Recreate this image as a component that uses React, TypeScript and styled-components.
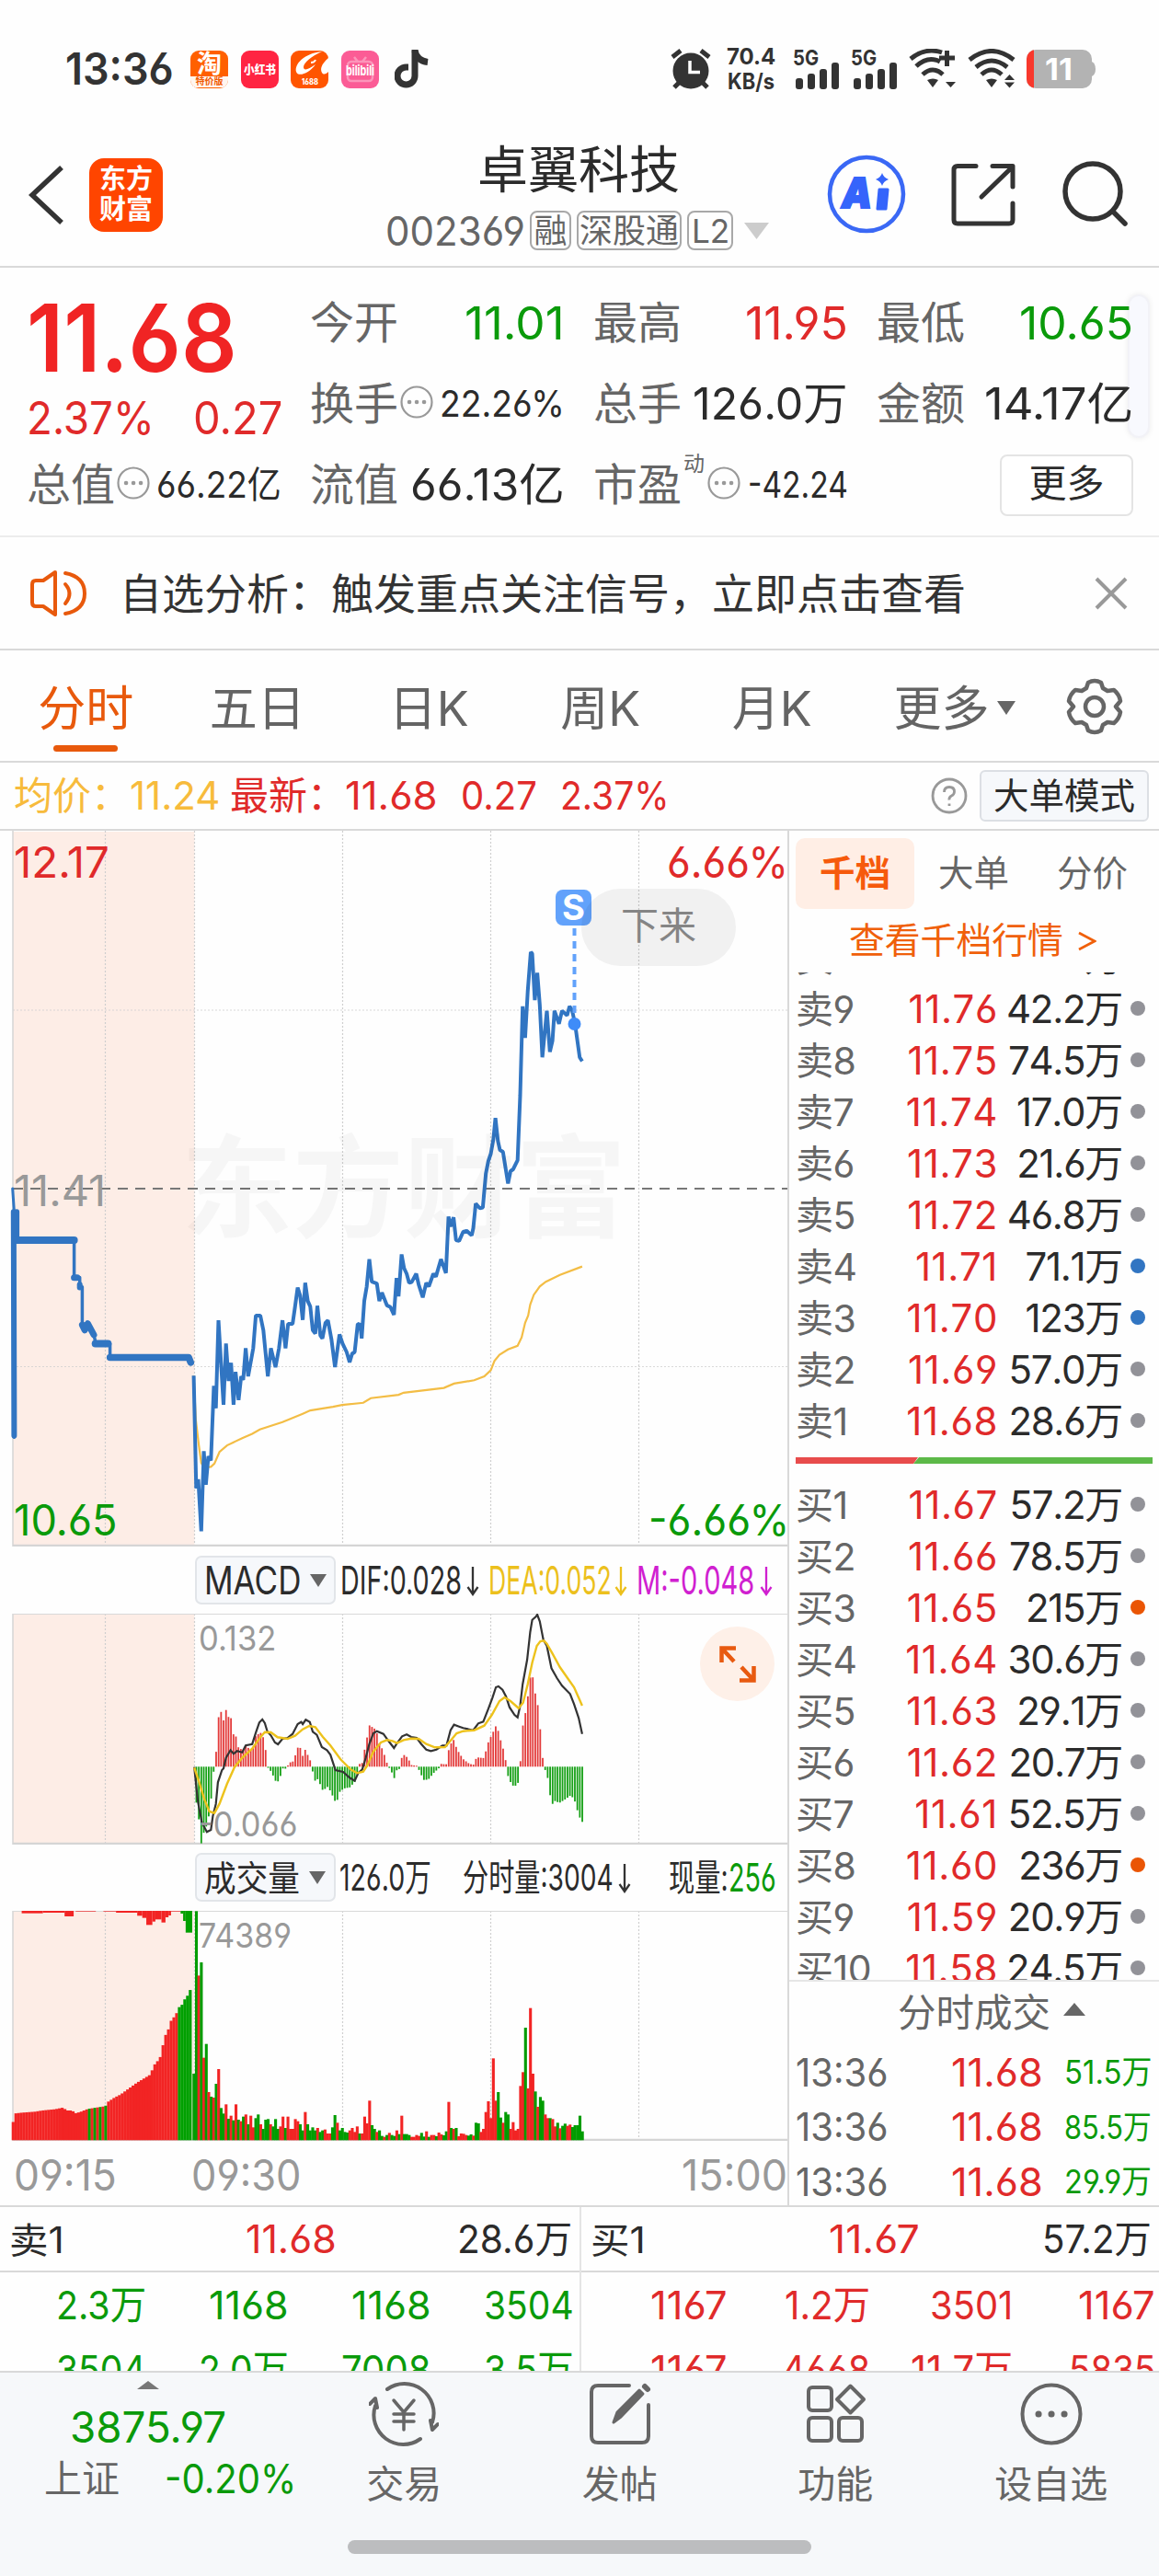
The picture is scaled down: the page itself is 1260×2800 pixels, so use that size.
import React, { useLayoutEffect, useRef, useState } from 'react';
import styled, { createGlobalStyle } from 'styled-components';

const C = {
  red: '#e02a2a',
  hot: '#f02424',
  green: '#0a9a0a',
  ink: '#2b2b2b',
  grey: '#666',
  mute: '#999',
  line: '#d9d9d9',
  orange: '#e8590c',
  blue: '#3175c2',
};

const Global = createGlobalStyle`
  * { box-sizing: border-box; }
  body { margin: 0; background: #fff; }
`;

const Screen = styled.div`
  width: 1260px;
  height: 2800px;
  overflow: hidden;
  background: #fefefe;
  color: ${C.ink};
  display: flex;
  flex-direction: column;
  position: relative;
  font-family: Inter, 'Noto Sans CJK SC', sans-serif;
  font-feature-settings: 'cv03', 'cv04';
  line-height: 1;
  white-space: nowrap;
`;

/* Text squeezed or stretched horizontally to a set width */
const FitBox = styled.span<{ $w: number }>`
  display: inline-block;
  flex: none;
  width: ${(p) => p.$w}px;
`;
const FitInner = styled.span`
  display: inline-block;
  transform-origin: left center;
`;
function Fit({ w, children }: { w: number; children: React.ReactNode }) {
  const ref = useRef<HTMLSpanElement>(null);
  const [k, setK] = useState(1);
  useLayoutEffect(() => {
    if (ref.current) setK(w / ref.current.offsetWidth);
  }, [w]);
  return (
    <FitBox $w={w}>
      <FitInner ref={ref} style={{ transform: `scaleX(${k})` }}>{children}</FitInner>
    </FitBox>
  );
}

const T = styled.span<{ $c?: string; $s?: number; $b?: number; $ml?: number }>`
  flex: none;
  color: ${(p) => p.$c || C.ink};
  font-size: ${(p) => p.$s || 42}px;
  font-weight: ${(p) => p.$b || 400};
  margin-left: ${(p) => p.$ml || 0}px;
`;
const Spring = styled.span`flex: 1;`;

/* ---------- status bar ---------- */
const StatusBar = styled.div`
  height: 150px;
  padding: 0 68px 0 71px;
  display: flex;
  align-items: center;
  flex: none;
`;
const AppIcon = styled.div<{ $bg: string; $ml?: number }>`
  width: 41px;
  height: 41px;
  margin-left: ${(p) => p.$ml ?? 14}px;
  border-radius: 9px;
  background: ${(p) => p.$bg};
  color: #fff;
  overflow: hidden;
  display: flex;
  flex-direction: column;
  align-items: center;
  justify-content: center;
  flex: none;
`;
const TaoBottom = styled.div`
  width: 41px;
  height: 12px;
  flex: none;
  background: #fff6f0;
  color: #f05a00;
  font-size: 10px;
  font-weight: 700;
  text-align: center;
  line-height: 11px;
`;
const NetSpeed = styled.div`
  display: flex;
  flex-direction: column;
  align-items: center;
  gap: 3px;
  margin-left: 17px;
  color: #333;
  font-size: 24px;
  font-weight: 700;
`;

const Signal = () => (
  <svg width="50" height="43" viewBox="0 0 50 43" fill="#333">
    <rect x="3" y="31" width="8" height="12" rx="3" />
    <rect x="16" y="26" width="8" height="17" rx="3" />
    <rect x="29" y="21" width="8" height="22" rx="3" />
    <rect x="42" y="14" width="8" height="29" rx="3" />
    <text x="0" y="17" fontSize="23" fontWeight="700" textLength="28" lengthAdjust="spacingAndGlyphs">5G</text>
  </svg>
);
const Wifi = ({ plus }: { plus?: boolean }) => (
  <svg width="53" height="44" viewBox="0 0 53 44" fill="none" stroke="#333" strokeWidth="5">
    <path d={plus ? 'M2 11Q18 -2 36 4' : 'M2 12Q26 -7 50 12'} />
    <path d={plus ? 'M8 19Q21 7 34 14' : 'M9 20Q26 6 43 20'} />
    <path d="M15 28Q26 18 37 28" />
    <path d="M20 34Q26 31 32 34L26 42Z" fill="#333" stroke="none" />
    {plus ? (
      <>
        <path d="M33 10H50M41.500 2V19" />
        <path d="M40 36h11l-5.500 6z" fill="#333" stroke="none" />
      </>
    ) : (
      <path d="M40 34l5.500-6 5.500 6zM40 36.500l5.500 6 5.500-6z" fill="#333" stroke="none" />
    )}
  </svg>
);
const Gap = styled.span<{ $w: number }>`
  width: ${(p) => p.$w}px;
  flex: none;
`;

function Status() {
  return (
    <StatusBar>
      <T $s={48} $b={600} $c="#333"><Fit w={118}>13:36</Fit></T>
      <AppIcon $bg="#ff6000" $ml={18}>
        <T $s={27} $b={700} $c="#fff">淘</T>
        <TaoBottom>特价版</TaoBottom>
      </AppIcon>
      <AppIcon $bg="#ff2442"><T $s={13} $b={900} $c="#fff"><Fit w={35}>小红书</Fit></T></AppIcon>
      <AppIcon $bg="#ff5500" $ml={13}>
        <svg width="41" height="41" viewBox="0 0 41 41">
          <path d="M34 1C14 3 4 15 6 23c2 6 14 2 21-8-8 6-13 7-13 3 0-5 9-12 20-17zM41 8c-8 7-9 12-7 16 2 3 5 1 7-1" fill="#fff" />
          <path d="M22 13q4 0 5-3" stroke="#fff" strokeWidth="2" fill="none" />
          <text x="12" y="37" fontSize="8.500" fontWeight="800" fill="#fff" textLength="18" lengthAdjust="spacingAndGlyphs">1688</text>
        </svg>
      </AppIcon>
      <AppIcon $bg="#fb5c96">
        <svg width="41" height="41" viewBox="0 0 41 41" fill="none" stroke="#fff">
          <g opacity=".35" strokeWidth="2.500"><rect x="7" y="12" width="27" height="21" rx="4" /><path d="M14 7l4 5M27 7l-4 5" /></g>
          <text x="5" y="27" fontSize="15" fontWeight="700" fill="#fff" stroke="none" textLength="31" lengthAdjust="spacingAndGlyphs">bilibili</text>
        </svg>
      </AppIcon>
      <Gap $w={17} />
      <svg width="37" height="42" viewBox="0 0 37 42" fill="none" stroke="#333" strokeWidth="7">
        <path d="M22 0v28.500A9.500 9.500 0 1 1 12.500 19H15" />
        <path d="M22 1q2 11 14 12.500" />
      </svg>
      <Spring />
      <svg width="44" height="44" viewBox="0 0 44 44">
        <circle cx="22" cy="24" r="19.500" fill="#333" />
        <path d="M2 9l9-7M42 9l-9-7M4 42l6-6M40 42l-6-6" stroke="#333" strokeWidth="5" />
        <path d="M21 13v12.500h11" stroke="#fff" strokeWidth="3.500" fill="none" />
      </svg>
      <NetSpeed><Fit w={53}>70.4</Fit><Fit w={51}>KB/s</Fit></NetSpeed>
      <Gap $w={19} /><Signal /><Gap $w={13} /><Signal /><Gap $w={13} /><Wifi plus /><Gap $w={11} /><Wifi />
      <Gap $w={11} />
      <svg width="76" height="42" viewBox="0 0 76 42">
        <clipPath id="batt"><rect width="71" height="42" rx="10" /></clipPath>
        <g clipPath="url(#batt)"><rect width="71" height="42" fill="#b3b3b3" /><rect width="8" height="42" fill="#f8382c" /></g>
        <path d="M71 13q4 2 4 8t-4 8z" fill="#b3b3b3" />
        <text x="20" y="33" fontSize="33" fontWeight="700" fill="#fff" textLength="30" lengthAdjust="spacingAndGlyphs">11</text>
      </svg>
    </StatusBar>
  );
}

/* ---------- title bar ---------- */
const TitleBar = styled.div`
  height: 141px;
  border-bottom: 2px solid ${C.line};
  display: flex;
  align-items: flex-start;
  padding: 2px 34px 0 31px;
  flex: none;
`;
const IconSlot = styled.div<{ $mt: number; $ml?: number }>`
  margin-top: ${(p) => p.$mt}px;
  margin-left: ${(p) => p.$ml || 0}px;
  flex: none;
  display: flex;
`;
const BrandTile = styled.div`
  width: 80px;
  height: 80px;
  margin: 20px 0 0 27px;
  border-radius: 16px;
  background: #ff4500;
  color: #fff;
  font-size: 29px;
  font-weight: 700;
  line-height: 33px;
  text-align: center;
  padding-top: 6px;
  flex: none;
`;
const TitleBlock = styled.div`
  width: 425px;
  margin-left: 242px;
  padding-top: 4px;
  display: flex;
  flex-direction: column;
  flex: none;
`;
const Name = styled.div`
  font-size: 55px;
  margin-left: 100px;
  height: 60px;
  line-height: 56px;
`;
const CodeRow = styled.div`
  display: flex;
  align-items: center;
  height: 45px;
  margin-top: 12px;
`;
const Tag = styled.span<{ $w: number; $ml?: number }>`
  width: ${(p) => p.$w}px;
  height: 43px;
  margin-left: ${(p) => p.$ml ?? 6}px;
  border: 2px solid #a8a8a8;
  border-radius: 8px;
  color: ${C.grey};
  font-size: 36px;
  display: flex;
  align-items: center;
  justify-content: center;
`;

function Title() {
  return (
    <TitleBar>
      <IconSlot $mt={27}>
        <svg width="39" height="66" viewBox="0 0 39 66" fill="none" stroke="#333" strokeWidth="5.500"><path d="M36 3L4 33l32 30" /></svg>
      </IconSlot>
      <BrandTile>东方<br />财富</BrandTile>
      <TitleBlock>
        <Name>卓翼科技</Name>
        <CodeRow>
          <T $s={44} $c={C.grey}><Fit w={152}>002369</Fit></T>
          <Tag $w={45} $ml={5}>融</Tag>
          <Tag $w={114}>深股通</Tag>
          <Tag $w={50}><Fit w={41}>L2</Fit></Tag>
          <Gap $w={12} />
          <svg width="27" height="18" viewBox="0 0 27 18"><path d="M0 0h27L13.500 18z" fill="#ccc" /></svg>
        </CodeRow>
      </TitleBlock>
      <IconSlot $mt={16} $ml={55}>
        <svg width="86" height="86" viewBox="0 0 86 86">
          <circle cx="43" cy="43" r="40" fill="none" stroke="#3a68f5" strokeWidth="4.500" />
          <text x="16" y="58" fontSize="46" fontWeight="900" fontStyle="italic" fill="#3564fb" stroke="#3564fb" strokeWidth="2" textLength="33" lengthAdjust="spacingAndGlyphs">A</text>
          <path d="M57 38h9l-2 21h-9z" fill="#3564fb" stroke="#3564fb" strokeWidth="3" strokeLinejoin="round" />
          <path d="M60 20q1.500 5 7 7-5.500 2-7 7-1.500-5-7-7 5.500-2 7-7z" fill="#3564fb" />
        </svg>
      </IconSlot>
      <IconSlot $mt={25} $ml={49}>
        <svg width="70" height="70" viewBox="0 0 70 70" fill="none" stroke="#333" strokeWidth="5" strokeLinecap="round" strokeLinejoin="round">
          <path d="M27 3.500H7q-4 0-4 4V62q0 4 4 4h56q4 0 4-4V44M45 3.500h22V26M66 5L33 37" />
        </svg>
      </IconSlot>
      <IconSlot $mt={22} $ml={50}>
        <svg width="72" height="74" viewBox="0 0 72 74" fill="none" stroke="#333" strokeWidth="5.500" strokeLinecap="round">
          <circle cx="34" cy="34" r="30" /><path d="M56 56l13 13" />
        </svg>
      </IconSlot>
    </TitleBar>
  );
}

/* ---------- quote summary ---------- */
const Quote = styled.div`
  height: 293px;
  border-bottom: 2px solid #ececec;
  padding: 0 28px 0 29px;
  flex: none;
  display: flex;
  flex-direction: column;
  position: relative;
  z-index: 1;
`;
const QuoteTop = styled.div`
  display: flex;
  height: 192px;
`;
const PriceBlock = styled.div`
  width: 308px;
  flex: none;
  padding-top: 25px;
`;
const Big = styled.div`
  height: 102px;
  font-size: 102px;
  font-weight: 600;
  line-height: 102px;
  color: ${C.hot};
`;
const Change = styled.div`
  display: flex;
  justify-content: space-between;
  width: 278px;
  height: 50px;
  margin-top: 12px;
  color: ${C.red};
  font-size: 49px;
`;
const Stats = styled.div`
  display: grid;
  grid-template-columns: 277px 277px 280px;
  grid-template-rows: 88px 88px;
  column-gap: 31px;
  padding-top: 16px;
`;
const Stat = styled.div<{ $w?: number }>`
  display: flex;
  align-items: center;
  width: ${(p) => p.$w || 277}px;
`;
const QuoteBottom = styled.div`
  display: flex;
  align-items: center;
  gap: 31px;
  height: 88px;
`;
const MoreBtn = styled.button`
  width: 145px;
  height: 67px;
  margin-left: auto;
  border: 2px solid #e4e4e4;
  border-radius: 8px;
  background: #fff;
  color: ${C.ink};
  font: inherit;
  font-size: 41px;
  line-height: 1;
  padding: 0 0 4px;
`;
const Sup = styled.span`
  font-size: 23px;
  color: ${C.grey};
  align-self: flex-start;
  margin: -10px 1px 0 2px;
`;
const Handle = styled.div`
  position: absolute;
  left: 1226px;
  top: 320px;
  width: 24px;
  height: 156px;
  border-radius: 13px;
  background: #f8f9fe;
  border: 2px solid #f2f2f7;
  box-shadow: 0 0 6px rgba(0, 0, 0, 0.08);
`;
const Dots = () => (
  <svg width="36" height="36" viewBox="0 0 36 36" fill="none" stroke="#999" strokeWidth="2.200" style={{ position: 'relative', left: 2, top: -2 }}>
    <circle cx="18" cy="18" r="16.500" />
    <path d="M10 18h.1M18 18h.1M26 18h.1" strokeWidth="4.500" strokeLinecap="round" />
  </svg>
);

function QuotePanel() {
  return (
    <Quote>
      <QuoteTop>
        <PriceBlock>
          <Big><Fit w={229}>11.68</Fit></Big>
          <Change><Fit w={139}>2.37%</Fit><Fit w={97}>0.27</Fit></Change>
        </PriceBlock>
        <Stats>
          <Stat><T $s={48} $c={C.grey}>今开</T><Spring /><T $s={49} $c={C.green}><Fit w={109}>11.01</Fit></T></Stat>
          <Stat><T $s={48} $c={C.grey}>最高</T><Spring /><T $s={49} $c={C.red}><Fit w={112}>11.95</Fit></T></Stat>
          <Stat $w={279}><T $s={48} $c={C.grey}>最低</T><Spring /><T $s={49} $c={C.green}><Fit w={124}>10.65</Fit></T></Stat>
          <Stat><T $s={48} $c={C.grey}>换手</T><Dots /><Spring /><T $s={40}><Fit w={136}>22.26%</Fit></T></Stat>
          <Stat><T $s={48} $c={C.grey}>总手</T><Spring /><T $s={48}><Fit w={169}>126.0万</Fit></T></Stat>
          <Stat $w={279}><T $s={48} $c={C.grey}>金额</T><Spring /><T $s={48}><Fit w={162}>14.17亿</Fit></T></Stat>
        </Stats>
      </QuoteTop>
      <QuoteBottom>
        <Stat><T $s={48} $c={C.grey}>总值</T><Dots /><Spring /><T $s={40}><Fit w={136}>66.22亿</Fit></T></Stat>
        <Stat><T $s={48} $c={C.grey}>流值</T><Spring /><T $s={48}><Fit w={168}>66.13亿</Fit></T></Stat>
        <Stat><T $s={48} $c={C.grey}>市盈</T><Sup>动</Sup><Dots /><Spring /><T $s={40}><Fit w={109}>-42.24</Fit></T></Stat>
        <MoreBtn>更多</MoreBtn>
      </QuoteBottom>
    </Quote>
  );
}

/* ---------- notice and period tabs ---------- */
const Notice = styled.div`
  height: 123px;
  border-bottom: 2px solid ${C.line};
  padding: 0 34px 0 33px;
  display: flex;
  align-items: center;
  flex: none;
`;
const NoticeText = styled.span`
  font-size: 46px;
  color: #333;
  margin-left: 35px;
`;
const Tabs = styled.div`
  height: 122px;
  border-bottom: 2px solid ${C.line};
  display: flex;
  align-items: flex-start;
  flex: none;
`;
const Tab = styled.div<{ $on?: boolean }>`
  width: 186.500px;
  padding-top: 38px;
  display: flex;
  flex-direction: column;
  align-items: center;
  gap: 13px;
  font-size: 52px;
  color: ${(p) => (p.$on ? C.orange : '#646464')};
  &::after {
    content: '';
    width: 70px;
    height: 7px;
    border-radius: 4px;
    background: ${(p) => (p.$on ? C.orange : 'transparent')};
  }
`;
const MoreTab = styled.div`
  display: flex;
  align-items: center;
  gap: 8px;
  padding-top: 38px;
  margin-left: 39px;
  width: 187px;
  font-size: 52px;
  color: #646464;
`;

const Toolbar = () => (
  <>
    <Notice>
      <svg width="62" height="52" viewBox="0 0 62 52" fill="none" stroke={C.orange} strokeWidth="4" strokeLinejoin="round" strokeLinecap="round">
        <path d="M14 12H6q-4 0-4 4v20q0 4 4 4h8l13 9V3z" />
        <path d="M38 16q9 10 0 21M38 4q21 4 21 22T38 48" />
      </svg>
      <NoticeText>自选分析：触发重点关注信号，立即点击查看</NoticeText>
      <Spring />
      <svg width="36" height="36" viewBox="0 0 36 36" stroke="#999" strokeWidth="4"><path d="M2 2l32 32M34 2L2 34" /></svg>
    </Notice>
    <Tabs>
      <Tab $on>分时</Tab>
      <Tab>五日</Tab>
      <Tab>日K</Tab>
      <Tab>周K</Tab>
      <Tab>月K</Tab>
      <MoreTab>更多<svg width="20" height="15" viewBox="0 0 20 15" style={{ marginTop: -4 }}><path d="M0 0h20L10 15z" fill="#666" /></svg></MoreTab>
      <IconSlot $mt={30}>
        <svg width="62" height="62" viewBox="0 0 62 62" fill="none" stroke="#666" strokeWidth="4.500" strokeLinejoin="round">
          <path d="M24 5q7-4 14 0l2 6 5 3 7-1q6 5 7 12l-5 6 5 6q-1 7-7 12l-7-1-5 3-2 6q-7 4-14 0l-2-6-5-3-7 1q-6-5-7-12l5-6-5-6q1-7 7-12l7 1 5-3z" />
          <circle cx="31" cy="31" r="10" />
        </svg>
      </IconSlot>
    </Tabs>
  </>
);

const InfoRow = styled.div`
  height: 74px;
  border-bottom: 2px solid ${C.line};
  display: flex;
  align-items: center;
  padding: 0 11px 0 15px;
  flex: none;
`;
const ModeBtn = styled.span`
  width: 184px;
  height: 56px;
  margin-left: 13px;
  border: 2px solid #dcdfe4;
  border-radius: 6px;
  background: #f6f8fb;
  font-size: 38.500px;
  display: flex;
  align-items: center;
  justify-content: center;
`;

/* ---------- charts ---------- */
const Middle = styled.div`
  display: flex;
  height: 1496px;
  border-bottom: 2px solid ${C.line};
  flex: none;
`;
const ChartColumn = styled.div`
  width: 858px;
  border-right: 2px solid ${C.line};
  flex: none;
`;
const Plot = styled.div<{ $h: number }>`
  position: relative;
  height: ${(p) => p.$h}px;
  svg { display: block; }
`;
const Mark = styled.div<{ $x?: number; $r?: number; $y: number; $c: string; $s: number }>`
  position: absolute;
  ${(p) => (p.$r !== undefined ? `right: ${p.$r}px;` : `left: ${p.$x}px;`)}
  top: ${(p) => p.$y}px;
  font-size: ${(p) => p.$s}px;
  color: ${(p) => p.$c};
`;
const Watermark = styled.div`
  position: absolute;
  left: 197px;
  top: 328px;
  font-size: 121px;
  font-weight: 700;
  color: rgba(0, 0, 0, 0.03);
`;
const Pill = styled.div`
  position: absolute;
  left: 632px;
  top: 63px;
  width: 168px;
  height: 84px;
  border-radius: 42px;
  background: rgba(0, 0, 0, 0.05);
  color: #858585;
  font-size: 41px;
  line-height: 80px;
  text-align: center;
`;
const SellFlag = styled.div`
  position: absolute;
  left: 604px;
  top: 64px;
  width: 39px;
  height: 39px;
  border-radius: 8px;
  background: #62a2fb;
  color: #fff;
  font-size: 38px;
  font-weight: 700;
  line-height: 39px;
  text-align: center;
`;
const Expand = styled.div`
  position: absolute;
  left: 761px;
  top: 14px;
  width: 81px;
  height: 81px;
  border-radius: 50%;
  background: #fef0e8;
  display: flex;
  align-items: center;
  justify-content: center;
`;
const IndicatorRow = styled.div`
  height: 73px;
  padding-left: 212px;
  display: flex;
  align-items: center;
`;
const Picker = styled.div`
  width: 153px;
  height: 53px;
  border: 2px solid #e2e5e9;
  border-radius: 7px;
  background: #f6f8fb;
  display: flex;
  align-items: center;
  padding-left: 8px;
  gap: 10px;
  font-size: 42px;
  flex: none;
`;
const Axis = styled.div`
  height: 70px;
  padding: 6px 0 0 15px;
  display: flex;
  align-items: center;
  color: ${C.mute};
  font-size: 46px;
`;

const pts = (s: string, fx: (x: number) => number, fy: (y: number) => number) =>
  s.trim().split(/\s+/).map((p) => {
    const [x, y] = p.split(',').map(Number);
    return `${fx(x).toFixed(1)},${fy(y).toFixed(1)}`;
  }).join(' ');
const X = (x: number) => x / 1.8233;
const PY = (y: number) => y / 2.529 + 177;
const MY = (y: number) => (y - 220) / 3;
const VY = (y: number) => (y - 229) / 3;

const PRICE = `384,1050 389,1360 393,1335 399,1478 404,1258 408,1350 413,1272 418,1283 424,1078 428,1140 433,898 443,1130 448,962 453,1065
458,1015 463,1130 467,1040 473,1117 478,1052 482,1062 487,975 492,1052 502,975 507,885 516,885 522,925 531,1052 537,975 546,1027 553,975 560,898
566,975 571,908 580,908 585,860 590,808 595,830 600,897 605,795 610,845 615,860 620,925 625,935 629,858 635,940 639,948 645,905 650,898 657,950
664,1027 673,937 679,962 687,985 693,1013 698,990 703,985 709,908 714,910 717,948 722,845 727,805 732,730 737,792 747,797 752,845 757,822 767,857
774,862 781,883 786,782 790,832 796,717 801,755 806,770 811,795 816,793 825,770 830,800 838,835 845,795 850,805 859,770 864,778 874,730 884,768
889,613 893,640 899,615 904,678 910,680 918,655 925,652 935,665 938,645 943,577 951,590 957,588 963,495 968,460 973,440 978,400 982,342 987,405
991,430 997,435 1007,522 1012,488 1017,483 1026,458 1031,280 1036,35 1041,122 1046,-5 1052,-114 1055,-110 1060,18 1065,-57 1070,30 1075,175
1084,47 1090,160 1095,130 1099,47 1108,83 1114,47 1124,60 1129,35 1134,45 1140,84 1149,175 1154,186`;
const AVERAGE = `384,1050 388,1170 394,1240 399,1290 404,1302 418,1301 425,1292 435,1260 450,1242 480,1222 500,1210 515,1198 560,1178 600,1155 615,1146
660,1136 678,1131 720,1125 735,1112 790,1103 800,1097 880,1084 900,1072 940,1063 960,1052 973,1035 980,1010 990,993 1007,978 1026,968 1034,945
1041,905 1047,885 1051,855 1058,828 1070,805 1082,792 1110,773 1154,750`;
const DIF = `385,720 392,830 400,900 410,932 418,925 422,880 428,840 432,770 440,730 443,725 448,690 457,665 463,677 470,668 480,672 487,650 500,645
507,608 514,575 520,565 525,577 530,605 537,617 545,640 551,646 560,628 570,625 580,612 590,580 597,573 600,580 606,566 614,573 620,605 628,615
638,655 648,665 655,680 665,730 680,736 693,755 703,765 710,740 718,728 725,690 732,645 740,610 747,603 760,612 770,635 781,658 786,645 797,620
806,614 815,622 826,625 835,645 845,663 854,668 865,663 877,650 885,650 893,600 900,582 910,588 918,593 938,600 948,578 958,572 968,530 976,495
983,460 988,457 996,468 1003,490 1010,525 1020,550 1026,558 1031,520 1036,450 1045,370 1051,280 1055,240 1062,230 1065,223 1070,245 1077,305
1084,325 1093,398 1104,430 1114,455 1130,482 1138,515 1147,560 1154,612`;
const DEA = `385,722 395,770 405,825 415,865 425,870 435,840 450,775 465,720 480,690 500,660 515,625 525,606 537,607 550,623 570,628 585,618 600,597
613,586 625,590 640,622 655,650 675,695 695,728 708,740 720,735 728,715 740,670 755,640 767,632 778,635 787,642 800,632 815,627 830,628 845,645
862,656 882,655 895,630 905,610 918,603 940,600 960,585 975,550 990,505 1000,493 1012,505 1028,528 1037,510 1046,450 1055,380 1064,325 1071,310
1078,308 1084,318 1095,350 1110,395 1125,430 1138,460 1146,490 1154,520`;
const HIST = `385,0 389,-115 394,-170 399,-250 404,-215 408,-200 413,-170 418,-115 424,-8 428,38 433,160 438,180 443,150 448,185 453,162 458,158
463,103 468,98 473,60 482,55 487,68 497,55 502,65 507,100 516,112 522,95 527,50 531,-3 537,-15 541,-28 546,-46 551,-48 556,-30 561,-5 565,-8 571,5
576,15 580,15 585,35 590,62 595,62 600,35 605,55 610,38 615,20 620,-18 625,-48 630,-40 640,-78 650,-65 655,-80 664,-112 669,-108 674,-80 684,-70
693,-68 703,-50 708,-25 713,10 718,12 722,50 727,90 732,135 742,125 747,110 752,75 757,60 762,38 767,12 772,-5 777,-20 781,-40 786,-12 791,-10
796,28 801,38 806,32 811,20 816,5 826,3 831,-12 836,-30 841,-45 850,-40 860,-20 870,-5 875,10 880,8 884,3 889,52 894,75 899,88 904,65 909,48
918,25 928,12 938,5 943,25 948,30 958,28 963,50 968,80 978,115 983,133 988,115 993,82 998,55 1003,15 1007,-30 1012,-50 1017,-62 1026,-62 1031,2
1036,130 1041,170 1046,225 1051,290 1055,305 1060,245 1065,215 1070,140 1075,35 1080,-8 1085,-30 1090,-90 1095,-122 1100,-112 1109,-118 1119,-108
1130,-95 1135,-100 1140,-115 1144,-140 1149,-165 1154,-180`;
const AUCTION = `25,945 29,890 45,887 70,884 85,880 110,876 128,870 131,880 145,880 148,890 160,885 175,875 210,866 215,852 228,838 240,828 255,810
272,790 290,772 300,762 305,735 318,710 325,660 330,630 335,615 340,588 350,567 355,545 362,535 368,515 373,505 380,480`;
const VOLUME = `g760 g230 r440 g397 r708 g663 r820 g835 r838 g793 r745 g872 g890 r860 g907 r897 g912 r860 g910 r915 g900 r893 g925 r897 r935 g905 g893
r925 g940 g910 g908 r925 g932 g908 g940 r932 r900 g937 r900 r940 r940 r908 r915 g925 g945 r885 g925 g945 g935 g945 r937 g950 g945 r942 r955 r955
g935 g895 r920 g945 g937 g950 g952 r945 r937 r950 r932 g955 r955 r900 r922 r848 g928 g940 r950 g945 g963 r966 g960 r953 g960 g963 r945 g957 r897
g957 g957 g960 r966 r966 r960 r963 g953 g965 r948 g966 r960 r960 g964 r952 r958 g961 g948 r852 g937 r940 g937 r964 r955 r956 r960 g962 g958 r962
g920 g922 r950 r940 r885 r850 r905 r710 r848 g820 g903 r920 g885 g893 r940 r918 r945 r940 r800 r755 g610 r808 r546 r760 g818 r868 g836 g848 r893
r905 g905 r908 r932 g920 r938 g930 g923 r930 r926 g934 g928 g928 g897 g948`.trim().split(/\s+/);
const TOP_AUCTION: [number, number, number, boolean][] = [
  [43, 85, 237, true], [85, 128, 235, true], [128, 146, 247, true], [150, 190, 231, true], [205, 230, 231, true], [230, 272, 235, true],
  [272, 282, 245, true], [282, 290, 252, true], [290, 302, 275, true], [302, 308, 264, true], [308, 320, 257, true], [320, 328, 267, true],
  [328, 334, 250, true], [334, 339, 244, true], [339, 358, 231, true], [358, 363, 238, false], [363, 368, 262, false], [368, 381, 300, false],
];

const parse = (s: string) => s.trim().split(/\s+/).map((p) => p.split(',').map(Number));
function sample(list: number[][], x: number) {
  for (let i = 1; i < list.length; i++) {
    if (x <= list[i][0]) {
      const [x0, y0] = list[i - 1];
      const [x1, y1] = list[i];
      return y0 + ((y1 - y0) * (x - x0)) / (x1 - x0);
    }
  }
  return list[list.length - 1][1];
}
const hist = parse(HIST);
const histBars = Array.from({ length: 157 }, (_, i) => {
  const x = 389.2 + i * 4.904;
  return { x: X(x), h: sample(hist, x) / 3 };
});
const auction = parse(AUCTION);
const auctionBars = Array.from({ length: 66 }, (_, i) => {
  const x = 25 + i * 5.4;
  const green = x > 352 || (x > 174 && x < 212 && i % 2 === 0);
  return { x: X(x), y: VY(sample(auction, x + 2)), green };
});

const Grid = ({ h, rows = [] }: { h: number; rows?: number[] }) => (
  <>
    <rect x="14" y="1" width="197.500" height={h - 2} fill="#fdede6" />
    <g stroke="#cfcfcf" strokeWidth="1.200" strokeDasharray="2 2">
      {[114.5, 211.5, 372.5, 533.5, 694.5].map((x) => <path key={x} d={`M${x} 0V${h}`} />)}
      {rows.map((y) => <path key={y} d={`M14 ${y}H856`} opacity=".8" />)}
    </g>
    <path d={`M14 0V${h}`} stroke="#d5d5d5" strokeWidth="1.500" />
    <path d={`M14 ${h - 1}H856`} stroke="#d5d5d5" strokeWidth="2.500" />
  </>
);

const PricePlot = () => (
  <Plot $h={778}>
    <Watermark>东方财富</Watermark>
    <svg width="856" height="778" viewBox="0 0 856 778" fill="none">
      <Grid h={778} rows={[195, 582.5]} />
      <path d="M14 389H856" stroke="#777" strokeWidth="2" strokeDasharray="11 8" />
      <polyline points={pts(AVERAGE, X, PY)} stroke="#f3bd45" strokeWidth="2.200" />
      <g stroke={C.blue} strokeLinejoin="round" strokeLinecap="round">
        <polyline points={pts('25,536 28,600 33,600 33,680 28,680 28,1220', X, PY)} strokeWidth="3" />
        <polyline points={pts('33,600 33,678', X, PY)} strokeWidth="6" />
        <polyline points={pts('27,600 28,1215', X, PY)} strokeWidth="6" />
        <polyline points={pts('33,678 147,678', X, PY)} strokeWidth="8" />
        <polyline points={pts('147,678 147,780 158,780 158,806 163,806 163,910 175,905 186,938 190,962 218,962 218,1000 376,1000 378,1015', X, PY)} strokeWidth="3.500" />
        <polyline points={pts('147,781 153,781', X, PY)} strokeWidth="7" />
        <polyline points={pts('158,800 158,808', X, PY)} strokeWidth="6" />
        <polyline points={pts('163,911 168,925 174,907 186,938', X, PY)} strokeWidth="7" />
        <polyline points={pts('189,962 214,962', X, PY)} strokeWidth="8" />
        <polyline points={pts('218,1000 374,1000 378,1014', X, PY)} strokeWidth="7.500" />
      </g>
      <polyline points={pts(PRICE, X, PY)} stroke={C.blue} strokeWidth="4" strokeLinejoin="bevel" />
      <path d="M624.500 106V210" stroke="#62a2fb" strokeWidth="4" strokeDasharray="8 6" />
      <circle cx="624.500" cy="210" r="7" fill="#3f8cf8" />
    </svg>
    <SellFlag>S</SellFlag>
    <Pill>下来</Pill>
    <Mark $x={15} $y={10} $s={47} $c={C.red}><Fit w={104}>12.17</Fit></Mark>
    <Mark $r={-1} $y={10} $s={47} $c={C.red}><Fit w={132}>6.66%</Fit></Mark>
    <Mark $x={15} $y={368} $s={46} $c={C.mute}><Fit w={100}>11.41</Fit></Mark>
    <Mark $x={15} $y={726} $s={46} $c={C.green}><Fit w={113}>10.65</Fit></Mark>
    <Mark $r={-2} $y={726} $s={46} $c={C.green}><Fit w={153}>-6.66%</Fit></Mark>
  </Plot>
);

const Caret = () => <svg width="18" height="14" viewBox="0 0 18 14"><path d="M0 0h18L9 14z" fill="#666" /></svg>;
const Down = ({ c }: { c: string }) => (
  <svg width="14" height="34" viewBox="0 0 14 34" fill="none" stroke={c} strokeWidth="2.300"><path d="M7 2v30M1.500 24L7 32l5.500-8" /></svg>
);

const MacdPlot = () => (
  <Plot $h={250}>
    <svg width="856" height="251" viewBox="0 0 856 251" fill="none">
      <Grid h={251} />
      <path d="M14 .500H856" stroke="#d9d9d9" />
      {histBars.map((b) => (
        <rect key={b.x} x={b.x - 0.9} y={b.h > 0 ? 166.3 - b.h : 166.3} width="1.800" height={Math.abs(b.h)} fill={b.h > 0 ? '#e33b3b' : '#16a016'} />
      ))}
      <polyline points={pts(DIF, X, MY)} stroke="#333" strokeWidth="2.200" />
      <polyline points={pts(DEA, X, MY)} stroke="#edc21c" strokeWidth="2.400" />
    </svg>
    <Mark $x={216} $y={8} $s={37} $c={C.mute}><Fit w={84}>0.132</Fit></Mark>
    <Mark $x={216} $y={210} $s={37} $c={C.mute}><Fit w={108}>-0.066</Fit></Mark>
    <Expand>
      <svg width="40" height="40" viewBox="0 0 40 40" fill="none" stroke="#e85a10" strokeWidth="4.500">
        <path d="M2.500 18V2.500H18M3 3l13 14M37.500 22v15.500H22M37 37L24 23" />
      </svg>
    </Expand>
  </Plot>
);

const VolumePlot = () => (
  <Plot $h={249}>
    <svg width="856" height="250" viewBox="0 0 856 250" fill="none">
      <Grid h={250} />
      <path d="M14 .500H856" stroke="#d9d9d9" />
      {TOP_AUCTION.map(([a, b, y, red]) => (
        <rect key={a} x={X(a)} y="0" width={X(b) - X(a)} height={VY(y)} fill={red ? '#f22424' : '#00a000'} />
      ))}
      {auctionBars.map((b) => (
        <rect key={b.x} x={b.x - 1} y={b.y} width="3.200" height={249.3 - b.y} fill={b.green ? '#00a000' : '#f22424'} />
      ))}
      {VOLUME.map((v, i) => {
        const y = VY(Number(v.slice(1)));
        return <rect key={i} x={X(384.3 + i * 4.905) - 1.5} y={y} width="3.100" height={249.3 - y} fill={v[0] === 'g' ? '#009c00' : '#f22424'} />;
      })}
    </svg>
    <Mark $x={216} $y={8} $s={37} $c={C.mute}><Fit w={101}>74389</Fit></Mark>
  </Plot>
);

const Charts = () => (
  <ChartColumn>
    <PricePlot />
    <IndicatorRow>
      <Picker><Fit w={105}>MACD</Fit><Caret /></Picker>
      <T $ml={5}><Fit w={132}>DIF:0.028</Fit></T><Gap $w={5} /><Down c="#333" />
      <T $ml={10} $c="#ecc01c"><Fit w={134}>DEA:0.052</Fit></T><Gap $w={3} /><Down c="#ecc01c" />
      <T $ml={10} $c="#d020d0"><Fit w={128}>M:-0.048</Fit></T><Gap $w={6} /><Down c="#d020d0" />
    </IndicatorRow>
    <MacdPlot />
    <IndicatorRow>
      <Picker><T $s={38}><Fit w={104}>成交量</Fit></T><Caret /></Picker>
      <T $ml={4} $s={40}><Fit w={100}>126.0万</Fit></T>
      <T $ml={34} $s={40}><Fit w={164}>分时量:3004</Fit></T><Gap $w={5} /><Down c="#333" />
      <T $ml={41} $s={40}><Fit w={65}>现量:</Fit></T>
      <T $c={C.green} $s={42}><Fit w={52}>256</Fit></T>
    </IndicatorRow>
    <VolumePlot />
    <Axis>
      <Fit w={112}>09:15</Fit><Gap $w={81} /><Fit w={119}>09:30</Fit><Spring /><Fit w={115}>15:00</Fit>
    </Axis>
  </ChartColumn>
);

/* ---------- order book ---------- */
const Book = styled.div`
  flex: 1;
  height: 1494px;
  overflow: hidden;
  display: flex;
  flex-direction: column;
`;
const BookTabs = styled.div`
  display: flex;
  height: 77px;
  margin: 8px 0 0 7px;
  flex: none;
`;
const BookTab = styled.div<{ $on?: boolean }>`
  width: 129px;
  height: 77px;
  border-radius: 10px;
  background: ${(p) => (p.$on ? '#ffeee5' : 'transparent')};
  color: ${(p) => (p.$on ? '#f65a0c' : C.grey)};
  font-weight: ${(p) => (p.$on ? 700 : 400)};
  font-size: 38.500px;
  display: flex;
  align-items: center;
  justify-content: center;
`;
const BookLink = styled.div`
  height: 69px;
  flex: none;
  display: flex;
  align-items: center;
  color: #f0600a;
  font-size: 38.800px;
  padding-left: 65px;
  gap: 16px;
`;
const Sells = styled.div`
  height: 516px;
  overflow: hidden;
  display: flex;
  flex-direction: column;
  justify-content: flex-end;
  flex: none;
`;
const Buys = styled.div`
  height: 546px;
  overflow: hidden;
  border-bottom: 2px solid #e6e6e6;
  flex: none;
`;
const OrderRow = styled.div`
  height: 56px;
  flex: none;
  padding-left: 7px;
  display: flex;
  align-items: center;
  font-size: 42px;
  font-kerning: none;
`;
const Side = styled.span`
  width: 96px;
  color: ${C.grey};
  font-size: 41px;
  letter-spacing: -0.500px;
`;
const Price = styled.span`
  width: 124px;
  color: ${C.red};
  text-align: right;
  letter-spacing: 0.600px;
`;
const Lots = styled.span`
  width: 135px;
  color: ${C.ink};
  text-align: right;
  letter-spacing: -1.300px;
`;
const Dot = styled.span<{ $c?: string }>`
  width: 16px;
  height: 16px;
  margin: -3px 0 0 9px;
  border-radius: 50%;
  background: ${(p) => p.$c || '#929298'};
`;
const DealsHead = styled.div`
  height: 69px;
  flex: none;
  display: flex;
  align-items: center;
  padding-left: 118px;
  gap: 14px;
  color: ${C.grey};
  font-size: 41.500px;
  svg { margin-top: -10px; }
`;
const Deal = styled.div`
  height: 59.600px;
  flex: none;
  display: flex;
  align-items: center;
  justify-content: space-between;
  padding: 0 8px 0 7px;
  font-size: 42px;
`;

type Order = [string, string, string, string?];
const sells: Order[] = [
  ['卖10', '11.77', '35.1万'], ['卖9', '11.76', '42.2万'], ['卖8', '11.75', '74.5万'], ['卖7', '11.74', '17.0万'], ['卖6', '11.73', '21.6万'],
  ['卖5', '11.72', '46.8万'], ['卖4', '11.71', '71.1万', C.blue], ['卖3', '11.70', '123万', C.blue], ['卖2', '11.69', '57.0万'], ['卖1', '11.68', '28.6万'],
];
const buys: Order[] = [
  ['买1', '11.67', '57.2万'], ['买2', '11.66', '78.5万'], ['买3', '11.65', '215万', '#ea5504'], ['买4', '11.64', '30.6万'], ['买5', '11.63', '29.1万'],
  ['买6', '11.62', '20.7万'], ['买7', '11.61', '52.5万'], ['买8', '11.60', '236万', '#ea5504'], ['买9', '11.59', '20.9万'], ['买10', '11.58', '24.5万'],
];
const Orders = ({ list }: { list: Order[] }) => (
  <>
    {list.map(([side, price, lots, c]) => (
      <OrderRow key={side}><Side>{side}</Side><Price>{price}</Price><Lots>{lots}</Lots><Dot $c={c} /></OrderRow>
    ))}
  </>
);
const RatioWrap = styled.div`
  height: 35px;
  padding: 11px 0 0 7px;
  flex: none;
  svg { display: block; }
`;

const OrderBook = () => (
  <Book>
    <BookTabs><BookTab $on>千档</BookTab><BookTab>大单</BookTab><BookTab>分价</BookTab></BookTabs>
    <BookLink>
      <span>查看千档行情</span>
      <svg width="20" height="22" viewBox="0 0 20 22" fill="none" stroke="#f0600a" strokeWidth="2.800"><path d="M1 2l17 9-17 9" /></svg>
    </BookLink>
    <Sells><Orders list={sells} /></Sells>
    <RatioWrap>
      <svg width="388" height="7" viewBox="0 0 388 7"><path d="M0 0h133l-5 7H0z" fill="#e84c4c" /><path d="M134 0h254v7H128z" fill="#5cb948" /></svg>
    </RatioWrap>
    <Buys><Orders list={buys} /></Buys>
    <DealsHead>分时成交<svg width="24" height="14" viewBox="0 0 24 14"><path d="M0 14h24L12 0z" fill="#666" /></svg></DealsHead>
    {['51.5万', '85.5万', '29.9万'].map((v) => (
      <Deal key={v}>
        <T $c={C.grey}><Fit w={101}>13:36</Fit></T>
        <T $c={C.red} $ml={44}><Fit w={100}>11.68</Fit></T>
        <T $c={C.green} $s={35}><Fit w={95}>{v}</Fit></T>
      </Deal>
    ))}
  </Book>
);

/* ---------- queue table ---------- */
const Queue = styled.div`
  height: 180px;
  display: flex;
  overflow: hidden;
  border-bottom: 2px solid ${C.line};
  flex: none;
`;
const QueueHalf = styled.div`
  width: 630px;
  flex: none;
  & + & { border-left: 2px solid #e4e4e4; }
`;
const QueueHead = styled.div`
  height: 71px;
  border-bottom: 2px solid ${C.line};
  display: flex;
  align-items: center;
  justify-content: space-between;
  padding: 1px 8px 0 10px;
`;
const QueueGrid = styled.div<{ $c: string }>`
  display: grid;
  grid-template-columns: repeat(4, 155px);
  grid-auto-rows: 70px;
  align-items: center;
  justify-items: end;
  margin-left: 4px;
  color: ${(p) => p.$c};
  font-size: 43px;
`;
const cellWidths: Record<string, number> = { '1168': 87, '7008': 98, '2.0万': 98, '1167': 84, '1.2万': 93, '3501': 90, '4668': 96, '11.7万': 111, '5835': 94 };
const QueueSide = ({ name, price, lots, w, cells, color }: { name: string; price: string; lots: string; w: number; cells: string[]; color: string }) => (
  <QueueHalf>
    <QueueHead>
      <T $s={39}><Fit w={60}>{name}</Fit></T>
      <T $c={C.red} $ml={66}><Fit w={99}>{price}</Fit></T>
      <T><Fit w={w}>{lots}</Fit></T>
    </QueueHead>
    <QueueGrid $c={color}>{cells.map((c, i) => <Fit key={i} w={cellWidths[c] || 98}>{c}</Fit>)}</QueueGrid>
  </QueueHalf>
);

/* ---------- bottom bar ---------- */
const Bottom = styled.div`
  flex: 1;
  background: #f6f8fa;
  display: flex;
  flex-direction: column;
  align-items: center;
`;
const NavRow = styled.div`
  width: 1260px;
  height: 182px;
  display: flex;
`;
const IndexCell = styled.div`
  width: 322px;
  display: flex;
  flex-direction: column;
  align-items: center;
  padding-top: 9px;
`;
const IndexValue = styled.div`
  margin: 18px 0 8px;
  font-size: 46px;
  color: ${C.green};
`;
const IndexLine = styled.div`
  display: flex;
  justify-content: space-between;
  align-items: center;
  width: 274px;
  height: 50px;
  margin-left: 48px;
  align-self: flex-start;
`;
const Nav = styled.div`
  width: 234.500px;
  display: flex;
  flex-direction: column;
  align-items: center;
  padding-top: 10px;
  gap: 21px;
  color: ${C.grey};
  font-size: 41px;
`;
const HomeBar = styled.div`
  width: 504px;
  height: 15px;
  border-radius: 8px;
  background: #bcbdbf;
`;
const NavSvg = ({ children }: { children: React.ReactNode }) => (
  <svg width="76" height="70" viewBox="-38 -35 76 70" fill="none" stroke="#666" strokeWidth="4" strokeLinecap="round" strokeLinejoin="round">{children}</svg>
);

const BottomBar = () => (
  <Bottom>
    <NavRow>
      <IndexCell>
        <svg width="24" height="9" viewBox="0 0 24 9"><path d="M0 9h24L12 0z" fill="#777" /></svg>
        <IndexValue><Fit w={170}>3875.97</Fit></IndexValue>
        <IndexLine><T $s={41} $c={C.grey}>上证</T><T $s={44} $c={C.green}><Fit w={143}>-0.20%</Fit></T></IndexLine>
      </IndexCell>
      <Nav>
        <NavSvg>
          <path d="M-18 -27A32 32 0 0 1 31 9M18 27A32 32 0 0 1 -31 -9M-37 -11l6-6 2 10M37 11l-6 6-2-10" />
          <path d="M-11 -15L0 -2L11 -15M0 -2V17M-11 0H11M-11 8H11" strokeWidth="3.500" />
        </NavSvg>
        交易
      </Nav>
      <Nav>
        <NavSvg>
          <path d="M10 -31H-24Q-31 -31 -31 -24V24Q-31 31 -24 31H24Q31 31 31 24V-10" />
          <path d="M-7 9L-3 -2L21 -26L25 -22L1 3Z" fill="#666" strokeWidth="3" /><path d="M27 -30L30 -27" strokeWidth="6" />
        </NavSvg>
        发帖
      </Nav>
      <Nav>
        <NavSvg>
          <rect x="-29" y="-29" width="25" height="25" rx="4" /><rect x="-29" y="4" width="25" height="25" rx="4" />
          <rect x="4" y="4" width="25" height="25" rx="4" /><path d="M16.500 -30.500L31 -16L16.500 -1.500L2 -16Z" />
        </NavSvg>
        功能
      </Nav>
      <Nav>
        <NavSvg><circle r="31.500" /><path d="M-14 0h.1M0 0h.1M14 0h.1" strokeWidth="7" /></NavSvg>
        设自选
      </Nav>
    </NavRow>
    <HomeBar />
  </Bottom>
);

export default function App() {
  return (
    <>
      <Global />
      <Screen>
        <Status />
        <Title />
        <Handle />
        <QuotePanel />
        <Toolbar />
        <InfoRow>
          <T $c="#f7bb3c">均价：</T><T $c="#f7bb3c"><Fit w={98}>11.24</Fit></T>
          <T $c={C.red} $ml={11}>最新：</T><T $c={C.red} $ml={-1}><Fit w={101}>11.68</Fit></T>
          <T $c={C.red} $ml={25}><Fit w={83}>0.27</Fit></T><T $c={C.red} $ml={25}><Fit w={119}>2.37%</Fit></T>
          <Spring />
          <svg width="40" height="40" viewBox="0 0 40 40" fill="none" stroke="#999" strokeWidth="2.800">
            <circle cx="20" cy="20" r="18" />
            <path d="M14.500 16q0-5.500 5.500-5.500t5.500 5q0 3-3 4.500t-2.500 4.500M20 28.500v2.500" />
          </svg>
          <ModeBtn>大单模式</ModeBtn>
        </InfoRow>
        <Middle><Charts /><OrderBook /></Middle>
        <Queue>
          <QueueSide name="卖1" price="11.68" lots="28.6万" w={125} color={C.green} cells={['2.3万', '1168', '1168', '3504', '3504', '2.0万', '7008', '3.5万']} />
          <QueueSide name="买1" price="11.67" lots="57.2万" w={119} color={C.red} cells={['1167', '1.2万', '3501', '1167', '1167', '4668', '11.7万', '5835']} />
        </Queue>
        <BottomBar />
      </Screen>
    </>
  );
}
